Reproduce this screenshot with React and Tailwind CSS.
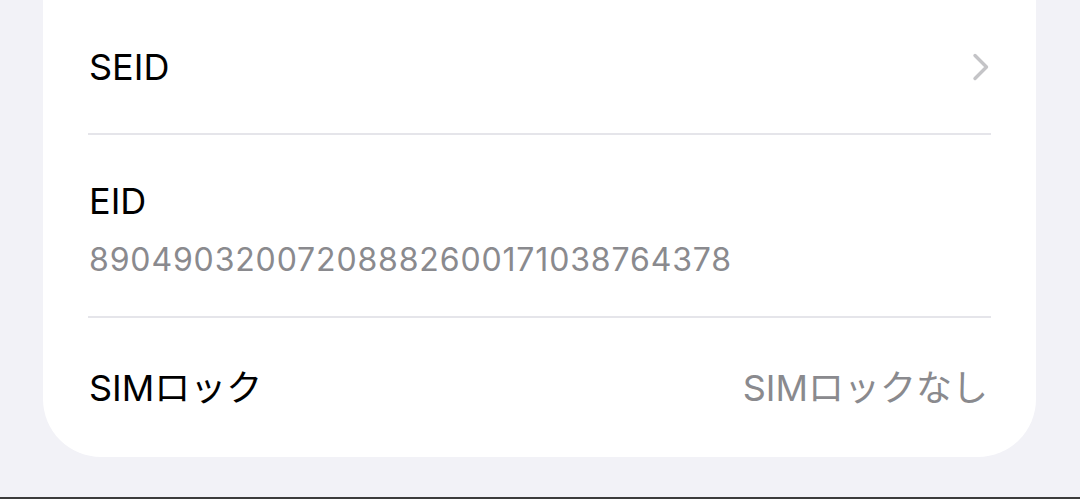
import React from "react";

const font = { fontFamily: '"Inter", "Noto Sans CJK JP", sans-serif' };

const Chevron = () => (
  <svg width="18" height="30" viewBox="0 0 18 30" fill="none">
    <path
      d="M3 3.5 L14.5 15 L3 26.5"
      stroke="#c4c4c7"
      strokeWidth="3.4"
      strokeLinecap="round"
      strokeLinejoin="round"
    />
  </svg>
);

const Divider = () => <div className="h-[2px] bg-[#e5e5ea] mx-[45px]" />;

export default function App() {
  return (
    <div
      className="w-[1080px] h-[499px] bg-[#f2f2f7] flex flex-col overflow-hidden"
      style={font}
    >
      <div className="ml-[43px] mr-[44px] bg-white rounded-b-[58px] flex flex-col">
        <div className="h-[133px] flex items-center justify-between pl-[46px] pr-[46px]">
          <span className="text-[36px] text-black leading-none">SEID</span>
          <Chevron />
        </div>
        <Divider />
        <div className="h-[181px] flex flex-col justify-center pt-[8px] pl-[46px] pr-[46px] gap-[25px]">
          <span className="text-[36px] text-black leading-none">EID</span>
          <span className="text-[32px] text-[#8a8a8e] leading-none tracking-[0.85px]">
            89049032007208882600171038764378
          </span>
        </div>
        <Divider />
        <div className="h-[139px] flex items-center justify-between pl-[46px] pr-[48px]">
          <span className="text-[36px] text-black leading-none">SIMロック</span>
          <span className="text-[36px] text-[#8a8a8e] leading-none">SIMロックなし</span>
        </div>
      </div>
      <div className="flex-1" />
      <div className="h-[2px] bg-[#3c3c3c]" />
    </div>
  );
}
